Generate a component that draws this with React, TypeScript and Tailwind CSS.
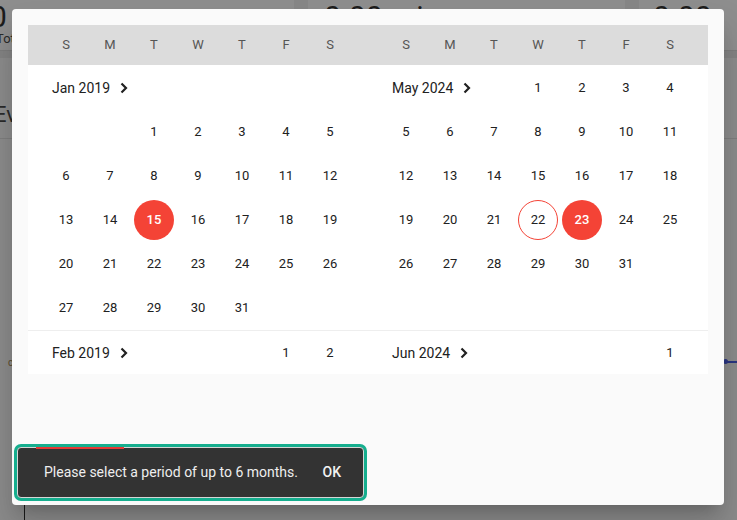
import React from 'react';

type MonthSpec = {
  label: string;
  firstDay: number; // 0 = Sunday
  days: number;
  filled?: number[];
  outlined?: number[];
};

const WEEK = ['S', 'M', 'T', 'W', 'T', 'F', 'S'];

const Chevron: React.FC = () => (
  <svg width="10" height="12" viewBox="0 0 10 12" className="ml-[9px]">
    <path d="M2.5 1.5 L7 6 L2.5 10.5" fill="none" stroke="#212121" strokeWidth="2.2" />
  </svg>
);

const DayCell: React.FC<{ day: number; month: MonthSpec }> = ({ day, month }) => {
  const filled = month.filled?.includes(day);
  const outlined = month.outlined?.includes(day);
  return (
    <div className="h-[44px] flex items-center justify-center">
      <span
        className={
          'w-10 h-10 rounded-full flex items-center justify-center text-[13px] ' +
          (filled
            ? 'bg-[#f44336] text-white font-medium'
            : outlined
              ? 'border border-[#f44336] text-[#212121]'
              : 'text-[#212121]')
        }
      >
        {day}
      </span>
    </div>
  );
};

// One month: label shares the first row when at least 3 cells are free,
// otherwise it takes a row of its own.
const Month: React.FC<{ month: MonthSpec; rows?: number }> = ({ month, rows = 6 }) => {
  const sharesRow = month.firstDay >= 3;
  const cells: React.ReactNode[] = [];

  const label = (
    <div className="h-[44px] flex items-center pl-2 text-[14px] text-[#212121]">
      {month.label}
      <Chevron />
    </div>
  );

  if (sharesRow) {
    cells.push(
      <div key="label" style={{ gridColumn: `span ${month.firstDay}` }}>
        {label}
      </div>
    );
  } else {
    cells.push(
      <div key="label" className="col-span-7">
        {label}
      </div>
    );
    for (let i = 0; i < month.firstDay; i++) cells.push(<div key={'e' + i} />);
  }

  for (let d = 1; d <= month.days; d++) {
    cells.push(<DayCell key={d} day={d} month={month} />);
  }

  return (
    <div className="px-4 overflow-hidden" style={{ height: rows * 44 }}>
      <div className="grid grid-cols-7 auto-rows-[44px]">{cells}</div>
    </div>
  );
};

const pairs: [MonthSpec, MonthSpec][] = [
  [
    { label: 'Jan 2019', firstDay: 2, days: 31, filled: [15] },
    { label: 'May 2024', firstDay: 3, days: 31, filled: [23], outlined: [22] },
  ],
  [
    { label: 'Feb 2019', firstDay: 5, days: 28 },
    { label: 'Jun 2024', firstDay: 6, days: 30 },
  ],
];

const Background: React.FC = () => (
  <div className="w-full h-full bg-[#878787] flex flex-col">
    {/* stat cards */}
    <div className="flex gap-[14px] h-[50px] shrink-0">
      <div className="w-[294px] bg-[#8e8e8e] relative overflow-hidden">
        <span className="absolute -left-[10px] -top-[6px] text-[30px] text-[#1c1c1c]">0</span>
        <span className="absolute -left-[4px] top-[29px] text-[13px] text-[#2a2a2a]">Tot</span>
      </div>
      <div className="w-[317px] bg-[#8e8e8e] relative overflow-hidden">
        <span className="absolute left-[16px] -top-[6px] text-[30px] text-[#1c1c1c]">0.00 mi</span>
      </div>
      <div className="flex-1 bg-[#8e8e8e] relative overflow-hidden">
        <span className="absolute left-[14px] -top-[6px] text-[30px] text-[#1c1c1c]">0.00 mph</span>
      </div>
    </div>
    <div className="h-[8px] border-t border-[#7c7c7c] bg-[#838383] shrink-0" />
    <div className="h-[81px] bg-[#8c8c8c] border-b border-[#7e7e7e] shrink-0 relative">
      <span className="absolute -left-[6px] top-[40px] text-[22px] text-[#2a2a2a]">Ev</span>
    </div>
    <div className="flex-1 bg-[#8c8c8c] relative">
      <span className="absolute left-[8px] top-[216px] text-[10px] text-[#5a4a2a]">c</span>
      <div className="absolute left-[724px] right-0 top-[222px] h-[2px] bg-[#2a3580]" />
      <div className="absolute left-[723px] top-[220px] w-[5px] h-[5px] rounded-full bg-[#2a3580]" />
      <div className="absolute left-[24px] bottom-0 w-px h-[20px] bg-[#1a1a1a]" />
    </div>
  </div>
);

export default function App() {
  return (
    <div
      className="relative w-[737px] h-[520px] overflow-hidden"
      style={{ fontFamily: 'Roboto, "Liberation Sans", sans-serif' }}
    >
      <Background />

      {/* date range dialog */}
      <div className="absolute left-[12px] top-[9px] w-[712px] h-[496px] bg-[#fafafa] rounded-[4px] shadow-[0_11px_15px_-7px_rgba(0,0,0,0.2),0_24px_38px_3px_rgba(0,0,0,0.14)] p-4">
        <div className="w-[680px]">
          <div className="h-[40px] bg-[#dcdcdc] grid grid-cols-2">
            {[0, 1].map((h) => (
              <div key={h} className="px-4 grid grid-cols-7">
                {WEEK.map((w, i) => (
                  <div key={i} className="flex items-center justify-center text-[13px] text-[#555]">
                    {w}
                  </div>
                ))}
              </div>
            ))}
          </div>
          <div className="bg-white h-[309px] pt-px overflow-hidden">
            {pairs.map((pair, i) => (
              <div
                key={i}
                className={'grid grid-cols-2 ' + (i > 0 ? 'border-t border-[#eeeeee]' : '')}
              >
                <Month month={pair[0]} />
                <Month month={pair[1]} />
              </div>
            ))}
          </div>
        </div>
      </div>

      {/* snackbar with focus ring */}
      <div className="absolute left-[14px] top-[444px] w-[353px] h-[57px] rounded-[7px] border-[3px] border-[#16ae8e] bg-[#16ae8e]">
        <div className="relative h-full rounded-[4px] border border-[#d6d6d6] bg-[#333333] flex items-center pl-[26px] pr-[22px]">
          <div className="absolute top-[-1px] left-[18px] w-[88px] h-[2px] bg-[#e53935]" />
          <span className="text-[14px] text-[#eeeeee] flex-1">Please select a period of up to 6 months.</span>
          <span className="text-[14px] font-medium text-[#f2f2f2]">OK</span>
        </div>
      </div>
    </div>
  );
}
